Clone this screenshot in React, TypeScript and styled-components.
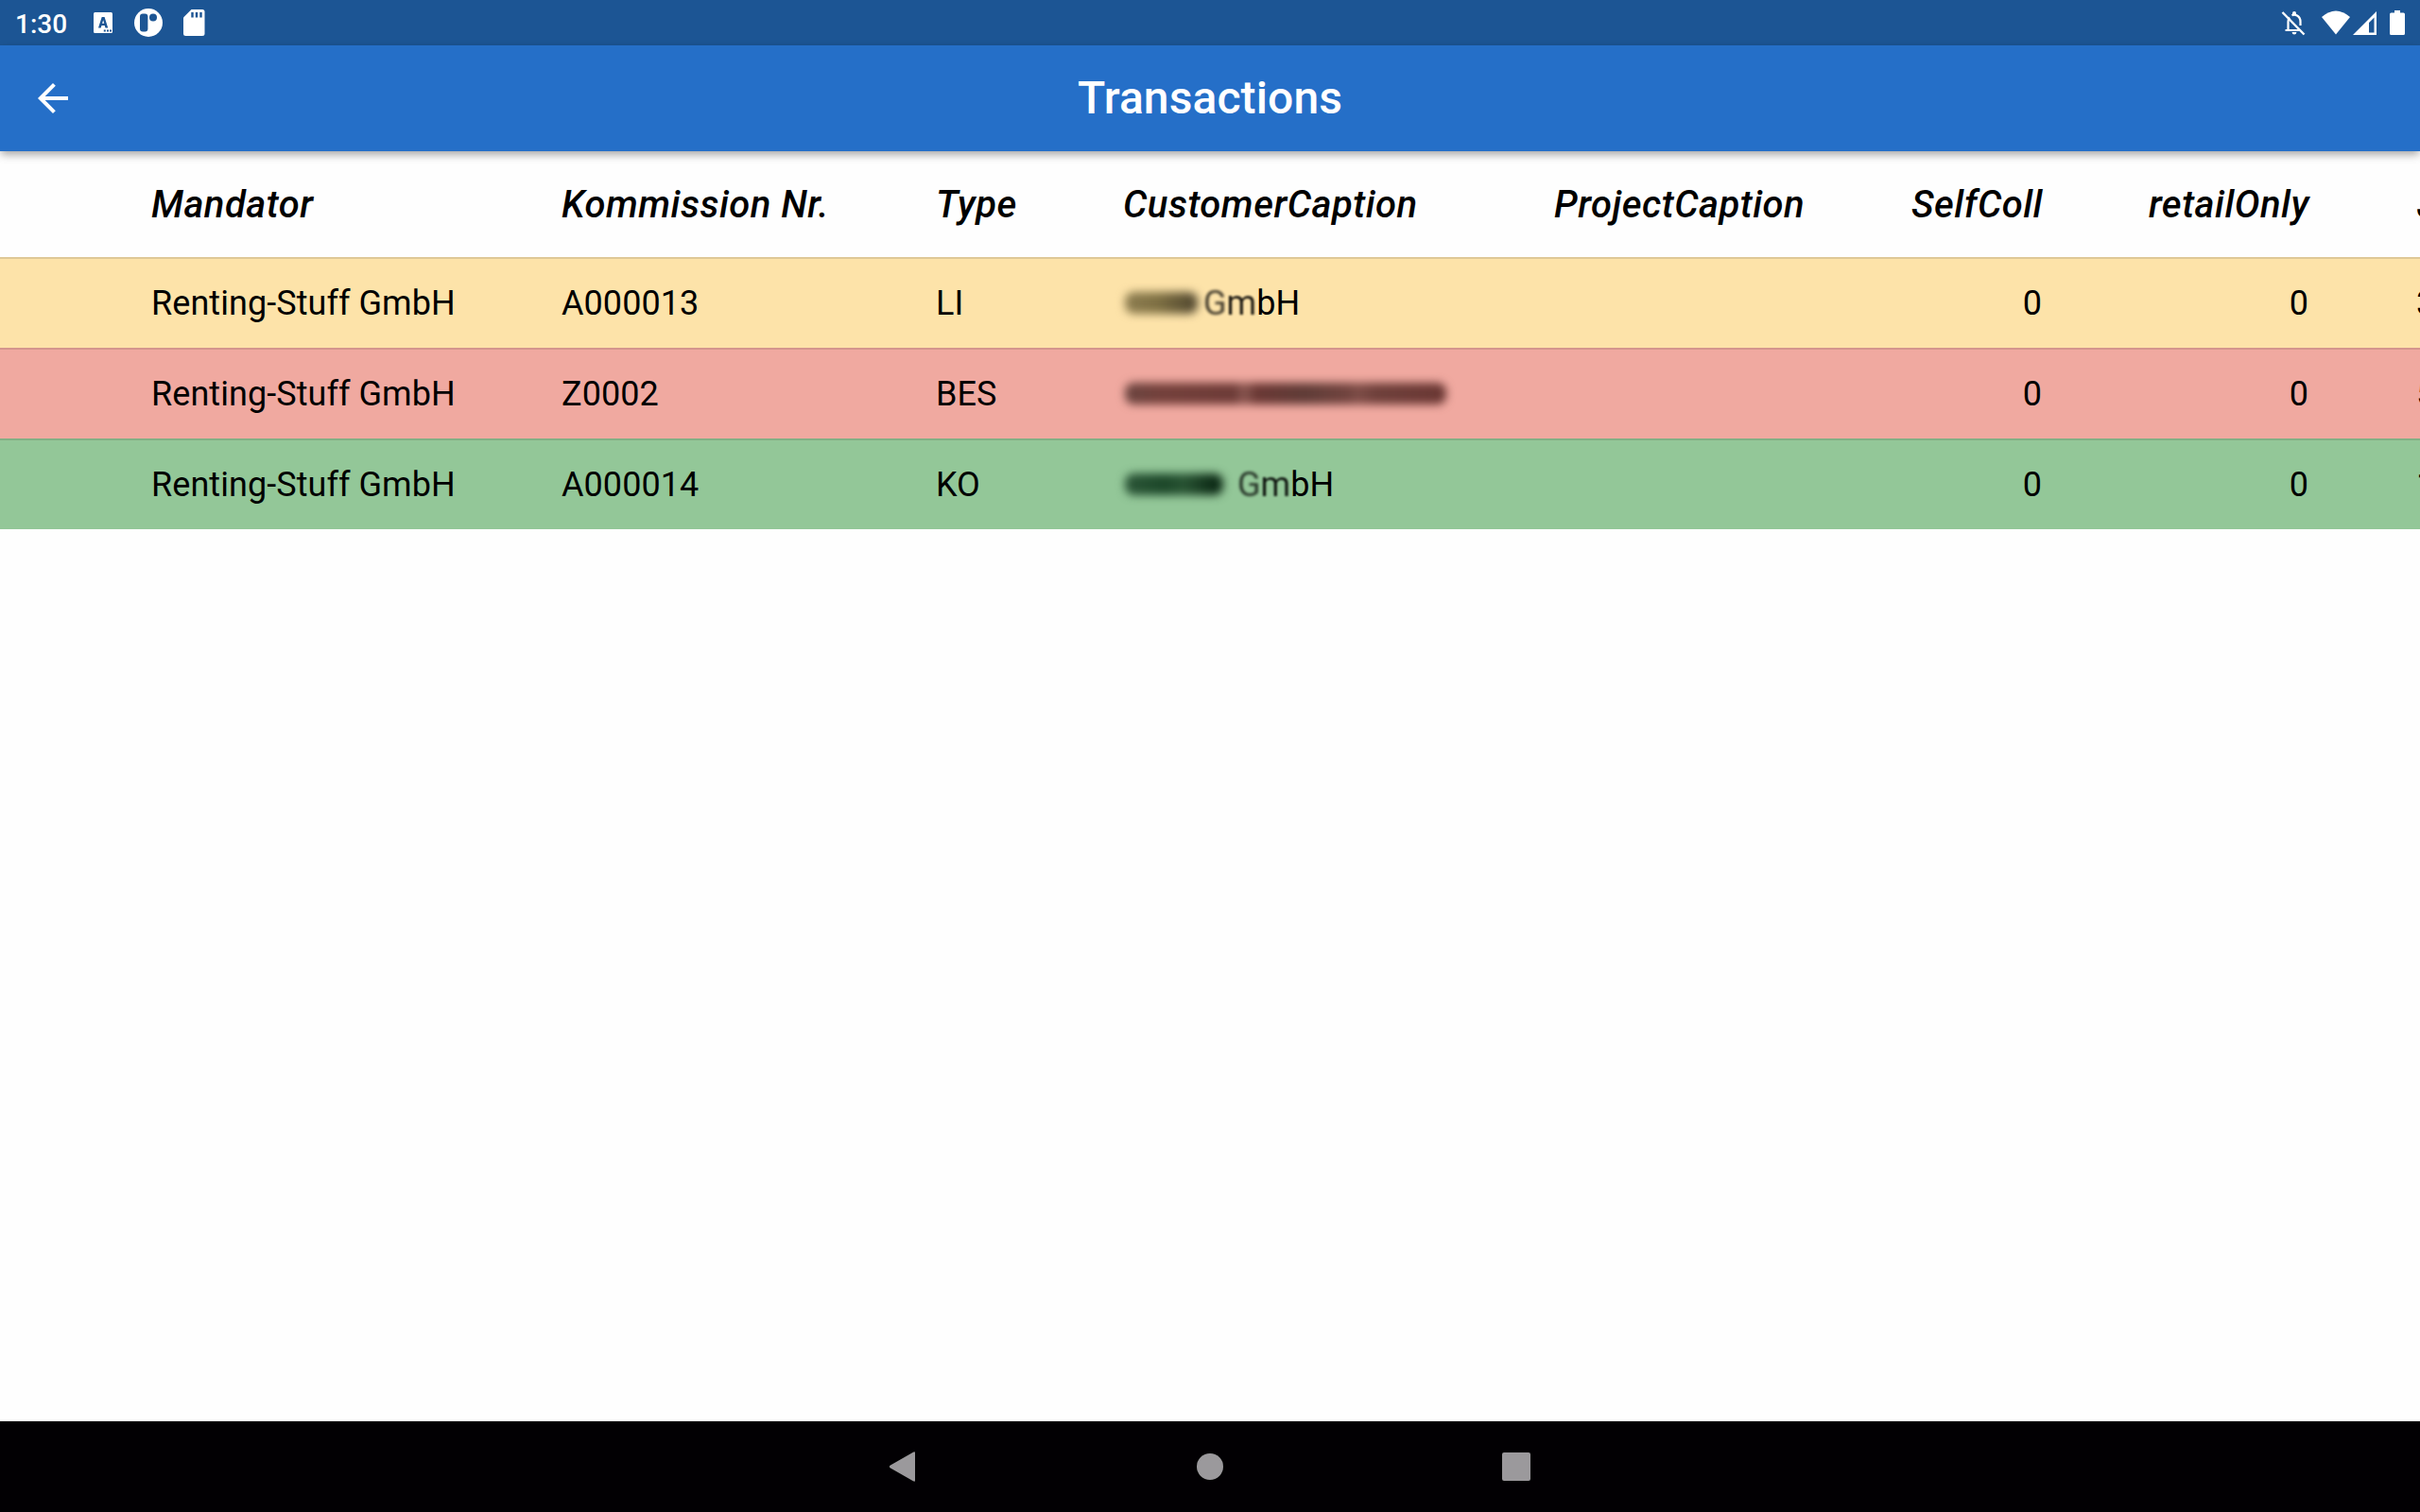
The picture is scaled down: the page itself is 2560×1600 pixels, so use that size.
import React from 'react';
import styled, { createGlobalStyle } from 'styled-components';

const GlobalStyle = createGlobalStyle`
  * { box-sizing: border-box; }
  html, body { margin: 0; padding: 0; overflow: hidden; }
  body { font-family: Roboto, "Noto Sans", sans-serif; background: #fefefe; color: #000; }
`;

const Screen = styled.div`
  width: 2560px;
  height: 1600px;
  display: flex;
  flex-direction: column;
  overflow: hidden;
  background: #fefefe;
`;

const StatusBar = styled.div`
  height: 48px;
  flex: none;
  display: flex;
  align-items: center;
  justify-content: space-between;
  background: #1c5594;
  color: #fff;
`;

const StatusGroup = styled.div`
  display: flex;
  align-items: center;
  height: 48px;
`;

const Clock = styled.span`
  width: 98px;
  padding: 3px 0 0 16px;
  font-size: 28px;
  line-height: 44px;
  font-weight: 500;
`;

const AppBar = styled.header`
  height: 112px;
  flex: none;
  display: grid;
  grid-template-columns: 112px 1fr 112px;
  align-items: center;
  background: #256fc8;
  color: #fff;
  z-index: 1;
  box-shadow: 0 4px 8px -2px rgba(0, 0, 0, 0.22), 0 4px 10px rgba(0, 0, 0, 0.2);
`;

const BackButton = styled.button`
  display: flex;
  align-items: center;
  justify-content: center;
  width: 112px;
  height: 112px;
  padding: 0;
  border: 0;
  background: none;
  color: inherit;
`;

const Title = styled.h1`
  margin: 0;
  text-align: center;
  font-size: 48px;
  line-height: 56px;
  font-weight: 500;
  letter-spacing: 0.1px;
`;

const Body = styled.main`
  flex: 1;
  overflow: hidden;
`;

const Row = styled.div<{ $tone?: string; $edge?: string }>`
  display: grid;
  grid-template-columns: 434px 396px 198px 456px 264px 252px 282px 300px;
  width: 2742px;
  height: 96px;
  padding-left: 160px;
  align-items: center;
  background: ${p => p.$tone ?? 'transparent'};
  border-top: 2px solid ${p => p.$edge ?? 'transparent'};
`;

const HeadRow = styled(Row)`
  height: 112px;
  padding-top: 2px;
  border-top: 0;
`;

const HeadCell = styled.div<{ $end?: boolean }>`
  font-size: 40px;
  line-height: 48px;
  font-weight: 500;
  font-style: italic;
  letter-spacing: 0.5px;
  white-space: nowrap;
  text-align: ${p => (p.$end ? 'right' : 'left')};
  margin-right: ${p => (p.$end ? -1 : 0)}px;
`;

const Cell = styled.div<{ $end?: boolean }>`
  display: flex;
  align-items: center;
  justify-content: ${p => (p.$end ? 'flex-end' : 'flex-start')};
  font-size: 36px;
  line-height: 44px;
  letter-spacing: 0.06px;
  white-space: nowrap;
`;

const Overflow = styled.div<{ $head?: boolean }>`
  padding-left: ${p => (p.$head ? 115 : 114)}px;
  font-size: ${p => (p.$head ? 40 : 36)}px;
  line-height: 48px;
  font-weight: ${p => (p.$head ? 500 : 400)};
  font-style: ${p => (p.$head ? 'italic' : 'normal')};
`;

const Redacted = styled.span<{ $width: number; $gap: number; $fill: string }>`
  width: ${p => p.$width}px;
  height: 23px;
  margin: 0 ${p => p.$gap}px 2px 2px;
  border-radius: 9px;
  background: ${p => p.$fill};
  filter: blur(5px);
`;

const Soft = styled.span<{ $blur: number; $opacity: number }>`
  filter: blur(${p => p.$blur}px);
  opacity: ${p => p.$opacity};
`;

const NavBar = styled.nav`
  height: 96px;
  flex: none;
  display: flex;
  align-items: center;
  justify-content: center;
  gap: 260px;
  background: #020003;
`;

const Company = () => (
  <span>
    <Soft $blur={1.7} $opacity={0.75}>G</Soft>
    <Soft $blur={0.8} $opacity={0.88}>m</Soft>bH
  </span>
);

type Entry = {
  tone: string;
  edge: string;
  number: string;
  type: string;
  mask: { width: number; gap: number; fill: string };
  company: boolean;
  next: string;
};

const entries: Entry[] = [
  {
    tone: '#fde3a9', edge: '#dfc896', number: 'A000013', type: 'LI',
    mask: { width: 77, gap: 6, fill: 'linear-gradient(90deg,#8d7d50,#7f7043 45%,#50462f)' },
    company: true, next: '3',
  },
  {
    tone: '#f0a9a0', edge: '#d4958d', number: 'Z0002', type: 'BES',
    mask: { width: 340, gap: 0, fill: 'linear-gradient(90deg,#6b4540,#74403b 12%,#6d3b37 34%,#8b5852 37%,#6a3834 41%,#603c37 56%,#72443f 70%,#7f4e48 72%,#6f403b 78%,#6a3733)' },
    company: false, next: '5',
  },
  {
    tone: '#93c798', edge: '#82b085', number: 'A000014', type: 'KO',
    mask: { width: 104, gap: 15, fill: 'linear-gradient(90deg,#2c5638,#1c4729 40%,#285333 60%,#0e2c17 90%)' },
    company: true, next: '1',
  },
];

export default function App() {
  return (
    <>
      <GlobalStyle />
      <Screen>
        <StatusBar>
          <StatusGroup>
            <Clock>1:30</Clock>
            <svg width="124" height="48" viewBox="98 0 124 48">
              <rect x="99" y="13" width="20" height="22" rx="1.5" fill="#fff" />
              <path d="M107.700 18H110.600L114.200 29.500H111.500L110.700 27H107.500L106.700 29.500H104ZM108.100 24.800H110.200L109.150 21.200Z" fill="#1c5594" fillRule="evenodd" />
              <path d="M109.800 32.500H111.800M113 32.500H115M116 32.500H118" stroke="#1c5594" strokeWidth="2" />
              <circle cx="157" cy="24" r="15" fill="#fff" />
              <rect x="148" y="14.600" width="8.400" height="18.800" rx="3" fill="#1c5594" />
              <circle cx="162" cy="18.500" r="4" fill="#1c5594" />
              <path d="M202.500 10H214Q216.500 10 216.500 12.500V35.500Q216.500 38 214 38H196.500Q194 38 194 35.500V18.500Z" fill="#fff" />
              <path d="M203.500 13V18.500M208 13V18.500M212.500 13V18.500" stroke="#1c5594" strokeWidth="2.400" />
            </svg>
          </StatusGroup>
          <StatusGroup>
            <svg width="150" height="48" viewBox="2410 0 150 48">
              <g fill="none" stroke="#fff" strokeWidth="2.200">
                <path d="M2417.500 32H2434M2420.500 32V23Q2420.500 20 2422 18.500M2424.500 16.200Q2427 15 2430 16.500Q2433.500 18.500 2433.500 23V27" />
                <path d="M2414.500 13 2437.500 36.500" strokeWidth="2.400" />
              </g>
              <path d="M2425 16V14Q2425 12 2427 12T2429 14V16ZM2424.500 34H2429.500Q2429 36.500 2427 36.500T2424.500 34Z" fill="#fff" />
              <path d="M2456 18Q2471 5 2486 18L2471 36.500Z" fill="#fff" />
              <path d="M2514 12V37H2489ZM2511.500 18.500L2506 24V34.500H2511.500Z" fill="#fff" fillRule="evenodd" />
              <path d="M2533 11H2539V13.500H2542.500Q2544 13.500 2544 15V35.500Q2544 37 2542.500 37H2529.500Q2528 37 2528 35.500V15Q2528 13.500 2529.500 13.500H2533Z" fill="#fff" />
            </svg>
          </StatusGroup>
        </StatusBar>
        <AppBar>
          <BackButton aria-label="Back">
            <svg width="48" height="48" viewBox="0 0 24 24">
              <path d="M20 11H7.830l5.590-5.590L12 4l-8 8 8 8 1.410-1.410L7.830 13H20v-2z" fill="#fff" />
            </svg>
          </BackButton>
          <Title>Transactions</Title>
        </AppBar>
        <Body>
          <HeadRow>
            <HeadCell>Mandator</HeadCell>
            <HeadCell>Kommission Nr.</HeadCell>
            <HeadCell>Type</HeadCell>
            <HeadCell>CustomerCaption</HeadCell>
            <HeadCell>ProjectCaption</HeadCell>
            <HeadCell $end>SelfColl</HeadCell>
            <HeadCell $end>retailOnly</HeadCell>
            <Overflow $head>J</Overflow>
          </HeadRow>
          {entries.map(e => (
            <Row key={e.number} $tone={e.tone} $edge={e.edge}>
              <Cell>Renting-Stuff GmbH</Cell>
              <Cell>{e.number}</Cell>
              <Cell>{e.type}</Cell>
              <Cell>
                <Redacted $width={e.mask.width} $gap={e.mask.gap} $fill={e.mask.fill} />
                {e.company && <Company />}
              </Cell>
              <Cell />
              <Cell $end>0</Cell>
              <Cell $end>0</Cell>
              <Overflow>{e.next}</Overflow>
            </Row>
          ))}
        </Body>
        <NavBar>
          <svg width="64" height="64" viewBox="0 0 64 64">
            <path d="M44 17.500V46.500Q44 48.500 42 47.300L17.500 33.300Q16 32 17.500 30.700L42 16.700Q44 15.500 44 17.500Z" fill="#9b999c" />
          </svg>
          <svg width="64" height="64" viewBox="0 0 64 64">
            <circle cx="32" cy="32" r="14" fill="#9b999c" />
          </svg>
          <svg width="64" height="64" viewBox="0 0 64 64">
            <rect x="17" y="17" width="30" height="30" rx="2" fill="#9b999c" />
          </svg>
        </NavBar>
      </Screen>
    </>
  );
}
